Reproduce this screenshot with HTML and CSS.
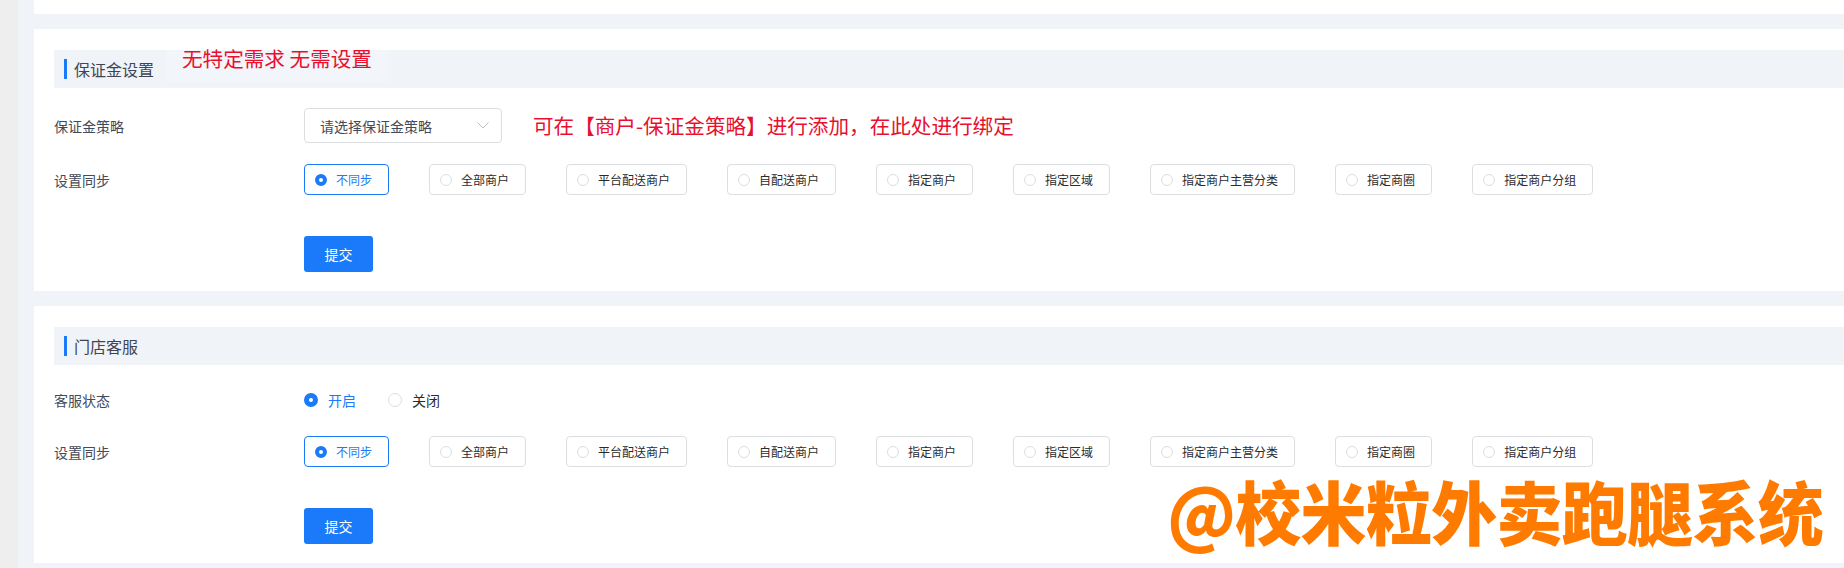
FILE: index.html
```html
<!DOCTYPE html>
<html lang="zh-CN">
<head>
<meta charset="utf-8">
<title>店铺设置</title>
<link rel="stylesheet" href="styles.css">
</head>
<body>
<div class="layout">
  <div class="rail"></div>
  <main class="content">
    <div class="card card-stub"></div>

    <section class="card">
      <div class="section-head">
        <span class="section-title">保证金设置</span>
        <span class="note note-head">无特定需求 无需设置</span>
      </div>
      <div class="form-row row-select">
        <span class="form-label">保证金策略</span>
        <div class="select">
          <span class="select-text">请选择保证金策略</span>
          <svg class="chevron" width="12" height="7" viewBox="0 0 12 7"><path d="M0.5 0.5 L6 6 L11.5 0.5" fill="none" stroke="#b8bcc4" stroke-width="1"/></svg>
        </div>
        <span class="note note-inline">可在【商户-保证金策略】进行添加，在此处进行绑定</span>
      </div>
      <div class="form-row row-sync">
        <span class="form-label">设置同步</span>
        <div class="radio-group">
          <span class="radio-btn checked"><i class="dot"></i>不同步</span>
          <span class="radio-btn"><i class="dot"></i>全部商户</span>
          <span class="radio-btn"><i class="dot"></i>平台配送商户</span>
          <span class="radio-btn"><i class="dot"></i>自配送商户</span>
          <span class="radio-btn"><i class="dot"></i>指定商户</span>
          <span class="radio-btn"><i class="dot"></i>指定区域</span>
          <span class="radio-btn"><i class="dot"></i>指定商户主营分类</span>
          <span class="radio-btn"><i class="dot"></i>指定商圈</span>
          <span class="radio-btn"><i class="dot"></i>指定商户分组</span>
        </div>
      </div>
      <div class="form-row row-submit">
        <button class="btn-primary">提交</button>
      </div>
    </section>

    <section class="card">
      <div class="section-head">
        <span class="section-title">门店客服</span>
      </div>
      <div class="form-row row-status">
        <span class="form-label">客服状态</span>
        <div class="radio-inline">
          <span class="radio checked"><i class="dot"></i>开启</span>
          <span class="radio"><i class="dot"></i>关闭</span>
        </div>
      </div>
      <div class="form-row row-sync">
        <span class="form-label">设置同步</span>
        <div class="radio-group">
          <span class="radio-btn checked"><i class="dot"></i>不同步</span>
          <span class="radio-btn"><i class="dot"></i>全部商户</span>
          <span class="radio-btn"><i class="dot"></i>平台配送商户</span>
          <span class="radio-btn"><i class="dot"></i>自配送商户</span>
          <span class="radio-btn"><i class="dot"></i>指定商户</span>
          <span class="radio-btn"><i class="dot"></i>指定区域</span>
          <span class="radio-btn"><i class="dot"></i>指定商户主营分类</span>
          <span class="radio-btn"><i class="dot"></i>指定商圈</span>
          <span class="radio-btn"><i class="dot"></i>指定商户分组</span>
        </div>
      </div>
      <div class="form-row row-submit">
        <button class="btn-primary">提交</button>
      </div>
    </section>
  </main>
</div>
<div class="watermark">@校米粒外卖跑腿系统</div>
</body>
</html>
```

FILE: styles.css
```css
* { box-sizing: border-box; }

html, body {
  margin: 0;
  padding: 0;
  height: 568px;
  overflow: hidden;
}

body {
  position: relative;
  background: #f0f3f8;
  font-family: "Noto Sans CJK SC", "Noto Sans", sans-serif;
  color: #515a6e;
}

.layout {
  display: flex;
  height: 568px;
}

.rail {
  width: 18px;
  flex: none;
  background: #eeeeee;
}

.content {
  flex: 1;
  min-width: 0;
  padding-left: 16px;
  display: flex;
  flex-direction: column;
  gap: 15px;
}

.card {
  background: #ffffff;
  padding: 21px 0 19px 20px;
}

.card-stub {
  height: 14px;
  padding: 0;
}

.section-head {
  position: relative;
  height: 38px;
  background: #f0f3f8;
  display: flex;
  align-items: center;
  padding-left: 10px;
}

.section-head::before {
  content: "";
  width: 3px;
  height: 20px;
  background: #1a7af8;
  margin-right: 7px;
}

.section-title {
  font-size: 16px;
  line-height: 20px;
  color: #3f4552;
}

.note {
  color: #e8102e;
  font-size: 20.6px;
  line-height: 21px;
  white-space: nowrap;
}

.note-head {
  position: absolute;
  left: 112px;
  top: -17px;
  padding: 15px 16px 13px;
  background: rgba(255, 255, 255, 0.18);
}

.note-inline {
  margin-left: 31px;
}

.form-row {
  display: flex;
  align-items: center;
}

.form-label {
  width: 250px;
  flex: none;
  font-size: 14px;
  line-height: 20px;
  color: #444a57;
}

.row-select {
  margin-top: 20px;
  height: 35px;
}

.row-status {
  margin-top: 20px;
  height: 30px;
}

.row-sync {
  margin-top: 21px;
  height: 31px;
}

.row-submit {
  margin-top: 41px;
  padding-left: 250px;
}

.select {
  width: 198px;
  height: 35px;
  border: 1px solid #dcdee2;
  border-radius: 4px;
  display: flex;
  align-items: center;
  justify-content: space-between;
  padding: 0 12px 0 15px;
}

.select-text {
  font-size: 14px;
  color: #444a57;
}

.chevron {
  display: block;
}

.radio-group {
  display: flex;
  gap: 40px;
}

.radio-btn {
  height: 31px;
  display: flex;
  align-items: center;
  border: 1px solid #dcdee2;
  border-radius: 4px;
  padding: 0 16px 0 10px;
  font-size: 12px;
  color: #2b2b2b;
  white-space: nowrap;
}

.radio-btn .dot {
  width: 12px;
  height: 12px;
  border-radius: 50%;
  border: 1px solid #dcdee2;
  background: #ffffff;
  margin-right: 9px;
  flex: none;
}

.radio-btn.checked {
  border-color: #1a7af8;
  color: #1a7af8;
}

.radio-btn.checked .dot {
  border: 4px solid #1a7af8;
}

.radio-inline {
  display: flex;
  align-items: center;
  gap: 32px;
}

.radio {
  display: flex;
  align-items: center;
  font-size: 14px;
  color: #2b2b2b;
}

.radio .dot {
  width: 14px;
  height: 14px;
  border-radius: 50%;
  border: 1px solid #dcdee2;
  background: #ffffff;
  margin-right: 10px;
  flex: none;
}

.radio.checked {
  color: #1a7af8;
}

.radio.checked .dot {
  border: 5px solid #1a7af8;
}

.btn-primary {
  width: 69px;
  height: 36px;
  border: none;
  border-radius: 3px;
  background: #1a7afa;
  color: #ffffff;
  font-family: inherit;
  font-size: 14px;
  padding: 0;
  cursor: pointer;
}

.watermark {
  position: absolute;
  right: 21px;
  top: 478px;
  font-size: 66px;
  line-height: 1;
  font-weight: 900;
  letter-spacing: -0.7px;
  color: #ff7b00;
  white-space: nowrap;
  transform: scaleY(1.05);
  transform-origin: center bottom;
}
```
